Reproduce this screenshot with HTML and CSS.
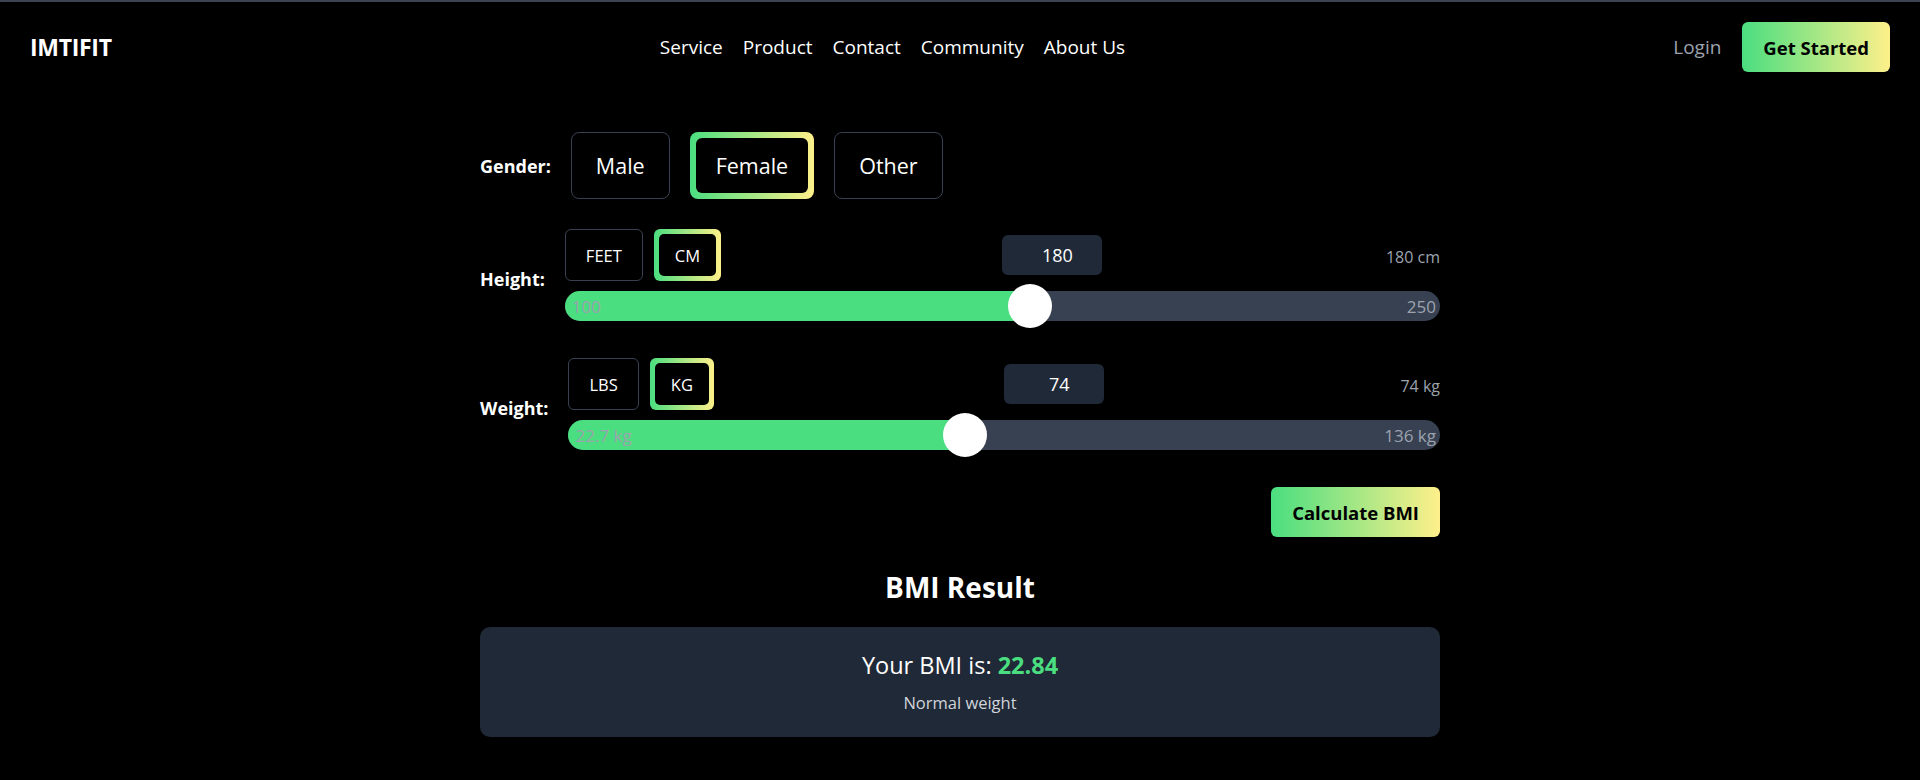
FILE: index.html
```html
<!DOCTYPE html>
<html lang="en">
<head>
<meta charset="utf-8">
<title>IMTIFIT - BMI Calculator</title>
<link rel="stylesheet" href="styles.css">
</head>
<body>
<header class="site-header">
  <a class="logo" href="#">IMTIFIT</a>
  <nav class="main-nav">
    <a href="#">Service</a>
    <a href="#">Product</a>
    <a href="#">Contact</a>
    <a href="#">Community</a>
    <a href="#">About Us</a>
  </nav>
  <div class="header-actions">
    <a class="login" href="#">Login</a>
    <a class="btn-gradient" href="#">Get Started</a>
  </div>
</header>

<main class="calc">
  <div class="field-row">
    <span class="field-label">Gender:</span>
    <div class="gender-options">
      <button class="opt">Male</button>
      <button class="opt-selected"><span>Female</span></button>
      <button class="opt">Other</button>
    </div>
  </div>

  <div class="field-row">
    <span class="field-label">Height:</span>
    <div class="measure">
      <div class="measure-top">
        <div class="units">
          <button class="unit">FEET</button>
          <button class="unit-selected"><span>CM</span></button>
        </div>
        <div class="value-side">
          <input class="num-input" type="text" value="180">
          <span class="value-text">180 cm</span>
        </div>
      </div>
      <div class="slider">
        <div class="track">
          <div class="fill" style="width: calc(53.33% - 1.47px)"></div>
          <span class="range-label">100</span>
          <span class="range-label">250</span>
        </div>
        <div class="thumb" style="left: calc(53.33% - 23.47px)"></div>
      </div>
    </div>
  </div>

  <div class="field-row">
    <span class="field-label">Weight:</span>
    <div class="measure">
      <div class="measure-top">
        <div class="units">
          <button class="unit">LBS</button>
          <button class="unit-selected"><span>KG</span></button>
        </div>
        <div class="value-side">
          <input class="num-input" type="text" value="74">
          <span class="value-text">74 kg</span>
        </div>
      </div>
      <div class="slider">
        <div class="track">
          <div class="fill" style="width: calc(45.28% + 2.08px)"></div>
          <span class="range-label">22.7 kg</span>
          <span class="range-label">136 kg</span>
        </div>
        <div class="thumb" style="left: calc(45.28% - 19.92px)"></div>
      </div>
    </div>
  </div>

  <div class="actions">
    <button class="btn-gradient">Calculate BMI</button>
  </div>

  <section class="result">
    <h2 class="result-title">BMI Result</h2>
    <div class="result-card">
      <p class="result-value">Your BMI is: <strong>22.84</strong></p>
      <p class="result-category">Normal weight</p>
    </div>
  </section>
</main>
</body>
</html>
```

FILE: styles.css
```css
* {
  box-sizing: border-box;
}

html, body {
  margin: 0;
  padding: 0;
}

body {
  background: #000;
  color: #fff;
  font-family: "Open Sans", "Noto Sans", sans-serif;
  border-top: 2px solid #3b4452;
  min-height: 100vh;
}

a {
  color: inherit;
  text-decoration: none;
}

button {
  font-family: inherit;
  cursor: pointer;
}

/* Header */
.site-header {
  display: flex;
  align-items: center;
  justify-content: space-between;
  padding: 20px 30px;
}

.logo {
  font-size: 23px;
  font-weight: 700;
  letter-spacing: -0.3px;
  color: #fff;
}

.main-nav {
  display: flex;
  gap: 20px;
  font-size: 19px;
}

.main-nav a {
  color: #fff;
}

.header-actions {
  display: flex;
  align-items: center;
  gap: 21px;
}

.login {
  color: #9ca3af;
  font-size: 19px;
}

.btn-gradient {
  display: inline-flex;
  align-items: center;
  justify-content: center;
  height: 50px;
  padding: 0 21px;
  border: none;
  border-radius: 6px;
  background: linear-gradient(to right, #4ade80, #fef08a);
  color: #000;
  font-size: 18.5px;
  font-weight: 700;
}

/* Calculator */
.calc {
  width: 960px;
  margin: 0 auto;
  padding-top: 40px;
  display: flex;
  flex-direction: column;
  gap: 30px;
}

.field-row {
  display: flex;
  align-items: center;
  gap: 20px;
}

.field-label {
  font-size: 18px;
  font-weight: 700;
  color: #fff;
}

.gender-options {
  display: flex;
  gap: 20px;
}

.opt {
  height: 67px;
  padding: 0 24px;
  background: transparent;
  border: 1px solid #374151;
  border-radius: 8px;
  color: #fff;
  font-size: 21.5px;
}

.opt-selected {
  height: 67px;
  padding: 6px;
  border: none;
  border-radius: 8px;
  background: linear-gradient(to right, #4ade80, #fef08a);
  color: #fff;
  font-size: 21.5px;
}

.opt-selected span {
  display: flex;
  align-items: center;
  height: 100%;
  padding: 0 20px;
  background: #000;
  border-radius: 6px;
}

.measure {
  flex: 1;
  display: flex;
  flex-direction: column;
  gap: 3px;
}

.measure-top {
  display: grid;
  grid-template-columns: 1fr 1fr;
  align-items: center;
}

.units {
  display: flex;
  gap: 11px;
}

.unit {
  height: 52px;
  padding: 0 20px;
  background: transparent;
  border: 1px solid #374151;
  border-radius: 6px;
  color: #fff;
  font-size: 16.5px;
}

.unit-selected {
  height: 52px;
  padding: 5px;
  border: none;
  border-radius: 6px;
  background: linear-gradient(to right, #4ade80, #fef08a);
  color: #fff;
  font-size: 16.5px;
}

.unit-selected span {
  display: flex;
  align-items: center;
  height: 100%;
  padding: 0 16px;
  background: #000;
  border-radius: 5px;
}

.value-side {
  display: flex;
  align-items: center;
  justify-content: space-between;
}

.num-input {
  width: 100px;
  height: 40px;
  padding: 0 0 0 10px;
  border: none;
  border-radius: 6px;
  background: #1f2937;
  color: #fff;
  font-family: inherit;
  font-size: 18px;
  text-align: center;
  outline: none;
}

.value-text {
  color: #9ca3af;
  font-size: 16px;
  padding-top: 4px;
}

/* Slider */
.slider {
  position: relative;
  height: 44px;
  display: flex;
  align-items: center;
}

.track {
  position: relative;
  flex: 1;
  height: 30px;
  border-radius: 15px;
  background: #374151;
  overflow: hidden;
  display: flex;
  align-items: center;
  justify-content: space-between;
  padding: 0 4px 0 7px;
}

.fill {
  position: absolute;
  left: 0;
  top: 0;
  bottom: 0;
  background: #4ade80;
}

.range-label {
  position: relative;
  color: #9ca3af;
  font-size: 17px;
}

.thumb {
  position: absolute;
  top: 0;
  width: 44px;
  height: 44px;
  border-radius: 50%;
  background: #fff;
}

.actions {
  display: flex;
  justify-content: flex-end;
}

/* Result */
.result {
  display: flex;
  flex-direction: column;
}

.result-title {
  margin: 0 0 20px;
  font-size: 28px;
  line-height: 40px;
  font-weight: 700;
  text-align: center;
  color: #fff;
}

.result-card {
  background: #1f2937;
  border-radius: 10px;
  padding: 22px;
  text-align: center;
  display: flex;
  flex-direction: column;
  gap: 10px;
}

.result-value {
  margin: 0;
  font-size: 23.5px;
  line-height: 32px;
  color: #fff;
}

.result-value strong {
  color: #4ade80;
  font-weight: 700;
}

.result-category {
  margin: 0;
  font-size: 16.5px;
  line-height: 24px;
  color: #d1d5db;
}
```
